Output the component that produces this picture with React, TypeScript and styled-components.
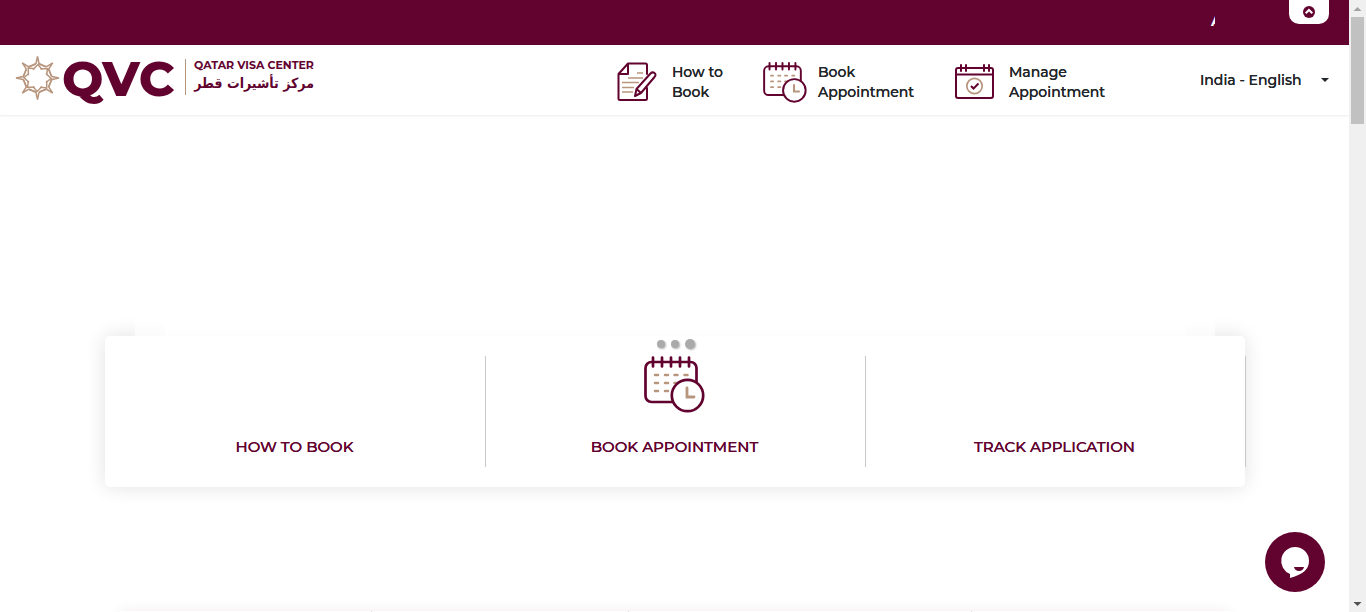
import React from "react";
import styled, { createGlobalStyle } from "styled-components";

const maroon = "#62022f";
const sand = "#b8967e";
const sans = `Montserrat, Inter, "Noto Sans", sans-serif`;

const GlobalStyle = createGlobalStyle`
  *, *::before, *::after { box-sizing: border-box; }
  body { margin: 0; background: #fff; color: #212529; font-family: ${sans}; }
  h2, p { margin: 0; }
`;

const Shell = styled.div`
  display: flex;
  height: 100vh;
  overflow: hidden;
`;

const Page = styled.div`
  position: relative;
  flex: 1;
  min-width: 0;
  overflow: hidden;
`;

const NoticeBar = styled.div`
  display: flex;
  align-items: center;
  justify-content: center;
  position: relative;
  height: 45px;
  background: ${maroon};
`;

const Ticker = styled.div`
  display: flex;
  width: calc(80% + 2px);
  overflow: hidden;
  color: #fff;
  font-size: 14px;
  font-weight: 700;
  line-height: 20px;
  white-space: nowrap;
`;

const TickerText = styled.p`
  flex: none;
  padding-left: calc(100% - 4px);
  padding-bottom: 4px;
`;

const CollapseButton = styled.button`
  position: absolute;
  top: 0;
  right: 20px;
  display: flex;
  align-items: center;
  justify-content: center;
  width: 40px;
  height: 24px;
  padding: 0;
  border: 0;
  border-radius: 0 0 10px 10px;
  background: #fff;
`;

const Header = styled.header`
  display: flex;
  align-items: center;
  height: 70px;
  padding: 0 20px 0 15px;
  background: #fff;
  box-shadow: 0 1px 2px rgba(0, 0, 0, 0.08);
`;

const Brand = styled.a`
  display: flex;
  align-items: center;
  color: ${maroon};
  text-decoration: none;
`;

const LogoArt = styled.svg`
  overflow: visible;
`;

const BrandName = styled.div`
  display: flex;
  flex-direction: column;
  margin-left: 8px;
  padding-bottom: 10px;
`;

const BrandEnglish = styled.span`
  font-size: 11px;
  font-weight: 700;
  line-height: 16px;
  white-space: nowrap;
`;

const BrandArabic = styled.span`
  font-family: "DejaVu Sans Condensed", "DejaVu Sans", sans-serif;
  font-size: 14px;
  font-weight: 700;
  line-height: 20px;
  white-space: nowrap;
`;

const Nav = styled.nav`
  display: flex;
  gap: 40px;
  margin-left: auto;
  padding-top: 4px;
`;

const NavLink = styled.a<{ $label: number }>`
  display: grid;
  grid-template-columns: 44px ${(p) => p.$label}px;
  gap: 11px;
  align-items: center;
  color: #212529;
  font-size: 14px;
  font-weight: 500;
  line-height: 20px;
  text-decoration: none;
  text-shadow: 0 0 0 currentColor;
`;

const Language = styled.label`
  display: flex;
  align-items: center;
  justify-content: space-between;
  width: 129px;
  margin-left: 95px;
`;

const LanguageSelect = styled.select`
  appearance: none;
  padding: 0;
  border: 0;
  background: transparent;
  color: #212529;
  font-family: inherit;
  font-size: 14px;
  font-weight: 500;
  line-height: 20px;
  text-shadow: 0 0 0 currentColor;
`;

const Hero = styled.section`
  height: 221px;
`;

const Panel = styled.section`
  position: relative;
  display: grid;
  grid-template-columns: repeat(3, 1fr);
  width: 1140px;
  max-width: 100%;
  margin: 0 auto;
  padding: 20px 0;
  border-radius: 5px;
  background: #fff;
  box-shadow: 0 0 20px rgba(0, 0, 0, 0.12);

  &::before,
  &::after {
    content: "";
    position: absolute;
    bottom: 100%;
    height: 30px;
    background: rgba(255, 255, 255, 0.7);
  }
  &::before { left: 30px; right: 30px; }
  &::after { left: 60px; right: 60px; }
`;

const Tile = styled.a`
  display: flex;
  flex-direction: column;
  align-items: center;
  justify-content: space-between;
  height: 111px;
  padding-bottom: 10px;
  box-shadow: 1px 0 0 #c8c8c8;
  color: ${maroon};
  font-size: 15px;
  font-weight: 500;
  line-height: 20px;
  text-decoration: none;
  text-shadow: 0 0 0 currentColor;
`;

const TileArt = styled.span`
  display: block;
  height: 60px;
`;

const Loader = styled.div`
  position: absolute;
  z-index: 1;
  top: 2px;
  left: 50%;
  display: flex;
  align-items: center;
  gap: 6px;
  width: 38px;
  height: 12px;
  margin-left: -18px;
`;

const Dot = styled.span<{ $size: number }>`
  width: ${(p) => p.$size}px;
  height: ${(p) => p.$size}px;
  flex: none;
  border-radius: 50%;
  background: #aaa;
  box-shadow: 1px 1px 2px rgba(0, 0, 0, 0.3);
`;

const Services = styled.section`
  display: grid;
  grid-template-columns: 251px 257px 343px 1fr;
  width: 1110px;
  max-width: 100%;
  margin: 124px auto 0;
  height: 160px;
  box-shadow: 0 0 12px rgba(98, 2, 47, 0.08);
`;

const ServiceColumn = styled.div`
  & + & { border-left: 1px solid #ddd; }
`;

const ChatButton = styled.button`
  position: absolute;
  right: 24px;
  bottom: 20px;
  width: 60px;
  height: 60px;
  padding: 0;
  border: 0;
  border-radius: 50%;
  background: ${maroon};
`;

const ScrollTrack = styled.div`
  display: flex;
  flex-direction: column;
  align-items: center;
  width: 17px;
  flex: none;
  background: #f0f0f0;
`;

const ScrollThumb = styled.div`
  width: 13px;
  height: 107px;
  margin-bottom: auto;
  background: #c1c1c1;
`;

const ScrollArrow = ({ down = false }: { down?: boolean }) => (
  <svg width="17" height="17" viewBox="0 0 17 17" aria-hidden="true">
    <path d={down ? "M4.500 7h8l-4 4z" : "M4.500 11h8l-4 -4z"} fill={down ? "#505050" : "#a3a3a3"} />
  </svg>
);

const Logo = () => (
  <LogoArt width="171" height="56" viewBox="0 0 171 56" role="img" aria-label="QVC">
    <g transform="translate(22.500 26)" fill="none" stroke={sand} strokeWidth="1.500">
      {[0, 45, 90, 135, 180, 225, 270, 315].map((a) => (
        <path key={a} transform={`rotate(${a})`} d="M-8.500 -11L-1.500 -14.500L0 -21.500L1.500 -14.500L8.500 -11M-4.500 -8.500L0.500 -13.500L4.500 -8.500" />
      ))}
    </g>
    <text x="47" y="44" fontFamily="Montserrat, Inter, sans-serif" fontWeight="800" fontSize="49" fill={maroon}>QVC</text>
    <path d="M170.500 7v36" stroke={sand} />
  </LogoArt>
);

const GuideIcon = () => (
  <svg width="44" height="40" viewBox="0 0 44 40" fill="none" aria-hidden="true">
    <path d="M20 11h6M11 16h15M5 20.500h17M5 25.500h12M5 30h11" stroke={sand} strokeWidth="1.500" />
    <g stroke={maroon} strokeWidth="2" strokeLinejoin="round" strokeLinecap="round">
      <path d="M30 12V3Q30 1.500 28.500 1.500H11L1.500 12V36.500Q1.500 38 3 38H28.500Q30 38 30 36.500V26M11 1.500V12H1.500" />
      <path d="M18 34l1.500-7L33.500 11.500Q35.500 9.500 37.500 11T37.500 15L24 31zM19.500 27L24 31" fill="#fff" />
    </g>
  </svg>
);

const CalendarClockIcon = ({ width, height }: { width: number; height: number }) => (
  <svg width={width} height={height} viewBox="0 0 61 57" fill="none" aria-hidden="true">
    <rect x="1.500" y="6" width="51" height="40" rx="6" stroke={maroon} strokeWidth="2.700" />
    <path d="M9 1.500v9M18 1.500v9M27 1.500v9M36 1.500v9M45 1.500v9" stroke={maroon} strokeWidth="2.700" strokeLinecap="round" />
    <path d="M11 19h3M21 19h3M30.500 19h3M40.500 19h3M11 27h3M21 27h3M30.500 27h3M11 35h3M21 35h3" stroke={sand} strokeWidth="2.500" strokeLinecap="round" />
    <circle cx="43.500" cy="39.500" r="15.700" fill="#fff" stroke={maroon} strokeWidth="2.700" />
    <path d="M43 32v9h7" stroke={sand} strokeWidth="2.800" strokeLinecap="round" />
  </svg>
);

const CalendarCheckIcon = () => (
  <svg width="44" height="36" viewBox="0 0 44 36" fill="none" aria-hidden="true">
    <rect x="2" y="4" width="37" height="30" rx="2" stroke={maroon} strokeWidth="2" />
    <path d="M2 10.500h37M7 1v6M12 1v6M30 1v6M35 1v6" stroke={maroon} strokeWidth="2" strokeLinecap="round" />
    <circle cx="20.500" cy="22" r="7.700" stroke={sand} strokeWidth="1.700" />
    <path d="M17 22l2.500 2.500 5-5" stroke={maroon} strokeWidth="2" />
  </svg>
);

export default function App() {
  return (
    <>
      <GlobalStyle />
      <Shell>
        <Page>
          <NoticeBar>
            <Ticker><TickerText>A</TickerText></Ticker>
            <CollapseButton aria-label="Collapse notice">
              <svg width="12" height="12" viewBox="0 0 12 12" fill="none" aria-hidden="true">
                <circle cx="6" cy="6" r="6" fill={maroon} />
                <path d="M2.700 7.300L6 4l3.300 3.300" stroke="#fff" strokeWidth="2" />
              </svg>
            </CollapseButton>
          </NoticeBar>
          <Header>
            <Brand href="#">
              <Logo />
              <BrandName>
                <BrandEnglish>QATAR VISA CENTER</BrandEnglish>
                <BrandArabic lang="ar" dir="rtl">مركز تأشيرات قطر</BrandArabic>
              </BrandName>
            </Brand>
            <Nav>
              <NavLink href="#how" $label={51}><GuideIcon />How to Book</NavLink>
              <NavLink href="#book" $label={96}><CalendarClockIcon width={44} height={41} />Book Appointment</NavLink>
              <NavLink href="#manage" $label={96}><CalendarCheckIcon />Manage Appointment</NavLink>
            </Nav>
            <Language>
              <LanguageSelect aria-label="Country and language">
                <option>India - English</option>
              </LanguageSelect>
              <svg width="8" height="4" viewBox="0 0 8 4" aria-hidden="true"><path d="M0 0h8L4 4z" fill="#212529" /></svg>
            </Language>
          </Header>
          <Hero />
          <Panel>
            <Loader role="status" aria-label="Loading">
              <Dot $size={8} /><Dot $size={8} /><Dot $size={10} />
            </Loader>
            <Tile href="#how"><TileArt />HOW TO BOOK</Tile>
            <Tile href="#book"><TileArt><CalendarClockIcon width={61} height={57} /></TileArt>BOOK APPOINTMENT</Tile>
            <Tile href="#track"><TileArt />TRACK APPLICATION</Tile>
          </Panel>
          <Services>
            <ServiceColumn /><ServiceColumn /><ServiceColumn /><ServiceColumn />
          </Services>
          <ChatButton aria-label="Open chat">
            <svg width="60" height="60" viewBox="0 0 60 60" aria-hidden="true">
              <path d="M30 15a14 14 0 0 1 14 14c0 8-5 13-19 17v-4A14 14 0 0 1 30 15z" fill="#fff" />
              <path d="M29 35h10q-1 4-5 4t-5-4z" fill={maroon} />
            </svg>
          </ChatButton>
        </Page>
        <ScrollTrack aria-hidden="true">
          <ScrollArrow />
          <ScrollThumb />
          <ScrollArrow down />
        </ScrollTrack>
      </Shell>
    </>
  );
}
